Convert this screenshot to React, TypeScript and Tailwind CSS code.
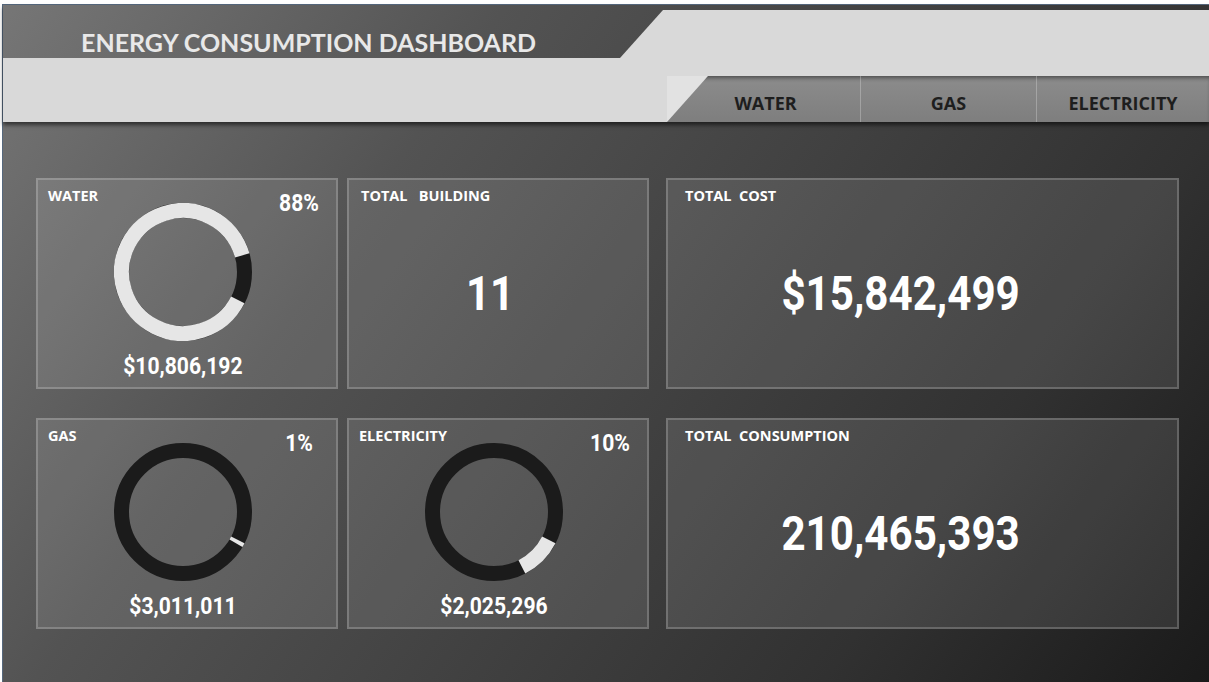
import React from 'react';

const num = { fontFamily: 'Roboto, "Liberation Sans", sans-serif' };
const ui = { fontFamily: '"Open Sans", "Noto Sans", sans-serif' };

function Donut({ pct }: { pct: number }) {
  const r = 61.5;
  const c = 2 * Math.PI * r;
  return (
    <svg width="138" height="138" viewBox="0 0 138 138">
      <circle cx="69" cy="69" r={r} fill="none" stroke="#1b1b1b" strokeWidth="15" />
      <circle
        cx="69"
        cy="69"
        r={r}
        fill="none"
        stroke="#e6e6e6"
        strokeWidth="15"
        strokeDasharray={`${(pct / 100) * c} ${c}`}
        transform="rotate(27 69 69)"
      />
    </svg>
  );
}

function DonutCard({ label, pct, value }: { label: string; pct: number; value: string }) {
  return (
    <div className="flex h-[211px] w-[302px] flex-col border-2 border-white/20 bg-white/10">
      <div className="flex h-[23px] items-start">
        <span className="mt-[8px] ml-[10px] flex-1 text-[14.5px] leading-4 font-bold text-white" style={ui}>
          {label}
        </span>
        <span
          className="mt-[11px] mr-[7px] inline-block w-[60px] scale-x-[0.88] text-center text-[24px] leading-6 font-bold text-white"
          style={num}
        >
          {pct}%
        </span>
      </div>
      <div className="flex flex-col items-center pr-[9px]">
        <Donut pct={pct} />
        <span className="mt-[13px] inline-block scale-x-[0.88] text-[24px] leading-6 font-bold text-white" style={num}>
          {value}
        </span>
      </div>
    </div>
  );
}

function BigCard({ label, value, wide }: { label: string; value: string; wide?: boolean }) {
  return (
    <div className={`flex h-[211px] flex-col border-2 border-white/20 bg-white/10 ${wide ? 'w-[513px]' : 'w-[302px]'}`}>
      <span
        className={`mt-[8px] text-[14.5px] leading-4 font-bold whitespace-pre text-white ${wide ? 'ml-[17px]' : 'ml-[12px]'}`}
        style={ui}
      >
        {label}
      </span>
      <div className={`flex flex-1 items-center justify-center pb-[4px] ${wide ? 'pr-[44px]' : 'pr-[16px]'}`}>
        <span className="inline-block scale-x-[0.86] text-[49px] leading-none font-bold text-white" style={num}>
          {value}
        </span>
      </div>
    </div>
  );
}

export default function App() {
  return (
    <div className="h-[682px] w-[1209px] overflow-hidden bg-white pt-[4px] pl-[2px]">
      <div className="h-full border-t border-l border-[#56687d] bg-[linear-gradient(125deg,#767676_0%,#535353_30%,#313131_77%,#1a1a1a_100%)]">
        <header className="shadow-[0_3px_4px_rgba(0,0,0,0.55)]">
          <div className="flex h-[53px]">
            <div className="flex w-[617px] items-end pl-[78px]">
              <h1
                className="text-[25px] leading-8 font-bold text-[#e8e8e8]"
                style={{ fontFamily: 'Lato, "Open Sans", sans-serif' }}
              >
                ENERGY CONSUMPTION DASHBOARD
              </h1>
            </div>
            <div className="mt-[5px] flex-1 bg-[#d9d9d9] [clip-path:polygon(43px_0,100%_0,100%_100%,0_100%)]" />
          </div>
          <div className="flex h-[64px] items-end justify-end bg-[#d9d9d9]">
            <div className="flex h-[46px] w-[542px] bg-[#e2e2e2] pt-[7px]">
              <nav
                className="-mt-[7px] flex h-[46px] w-full bg-[linear-gradient(180deg,#8c8c8c,#7e7e7e)] shadow-[inset_0_4px_4px_-2px_rgba(0,0,0,0.45)] [clip-path:polygon(41px_0,100%_0,100%_100%,0_100%)]"
                style={ui}
              >
                <div className="flex w-[193px] items-center justify-center pt-[8px] pl-[4px] text-[18px] font-bold text-[#1e1e1e]">
                  WATER
                </div>
                <div className="flex w-[176px] items-center justify-center border-l border-white/25 pt-[8px] text-[18px] font-bold text-[#1e1e1e]">
                  GAS
                </div>
                <div className="flex flex-1 items-center justify-center border-l border-white/25 pt-[8px] text-[18px] font-bold text-[#1e1e1e]">
                  ELECTRICITY
                </div>
              </nav>
            </div>
          </div>
        </header>

        <main className="mt-[56px] flex flex-col gap-[29px] pl-[33px]">
          <div className="flex gap-[9px]">
            <DonutCard label="WATER" pct={88} value="$10,806,192" />
            <BigCard label="TOTAL   BUILDING" value="11" />
            <div className="ml-[8px]">
              <BigCard label="TOTAL  COST" value="$15,842,499" wide />
            </div>
          </div>
          <div className="flex gap-[9px]">
            <DonutCard label="GAS" pct={1} value="$3,011,011" />
            <DonutCard label="ELECTRICITY" pct={10} value="$2,025,296" />
            <div className="ml-[8px]">
              <BigCard label="TOTAL  CONSUMPTION" value="210,465,393" wide />
            </div>
          </div>
        </main>
      </div>
    </div>
  );
}
